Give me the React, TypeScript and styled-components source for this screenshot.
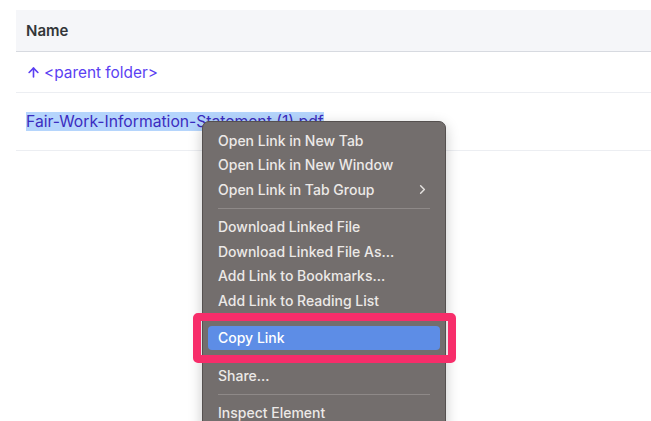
import styled, { createGlobalStyle, css } from "styled-components";
import { ArrowUp, ChevronRight } from "lucide-react";

const GlobalStyle = createGlobalStyle`
    html, body {
        margin: 0;
        padding: 0;
        background: #fff;
    }
    body {
        font-family: Inter, "Noto Sans", sans-serif;
    }
`

type Entry = { label: string; submenu?: boolean; active?: boolean } | "sep";

const menu: Entry[] = [
    { label: "Open Link in New Tab" },
    { label: "Open Link in New Window" },
    { label: "Open Link in Tab Group", submenu: true },
    "sep",
    { label: "Download Linked File" },
    { label: "Download Linked File As…" },
    { label: "Add Link to Bookmarks…" },
    { label: "Add Link to Reading List" },
    "sep",
    { label: "Copy Link", active: true },
    "sep",
    { label: "Share…" },
    "sep",
    { label: "Inspect Element" },
];

function App() {
    return (
        <Page>
            <GlobalStyle />
            <Table>
                <HeadRow>Name</HeadRow>
                <Row height={40}>
                    <ParentLink href="#">
                        <ArrowUp size={15} strokeWidth={2.6} />
                        &lt;parent folder&gt;
                    </ParentLink>
                </Row>
                <Row height={57}>
                    <FileLink href="#">Fair-Work-Information-Statement (1).pdf</FileLink>
                </Row>
            </Table>

            <Menu>
                {menu.map((item, i) =>
                    item === "sep" ? (
                        <Separator key={i} />
                    ) : (
                        <MenuItem key={i} active={item.active}>
                            {item.label}
                            {item.submenu && <ChevronRight size={15} strokeWidth={2.4} />}
                        </MenuItem>
                    )
                )}
            </Menu>
            <Callout />
        </Page>
    )
}

export default App

const Page = styled.div`
    position: relative;
    height: 421px;
    overflow: hidden;
    padding: 10px 0 0 16px;
    box-sizing: border-box;
`

const Table = styled.div`
    display: flex;
    flex-direction: column;
`

const HeadRow = styled.div`
    height: 41px;
    display: flex;
    align-items: center;
    padding-left: 10px;
    background-color: #f5f6f9;
    border-bottom: 1px solid #d7dae0;
    color: #333639;
    font-size: 15px;
    font-weight: 600;
`

const Row = styled.div<{ height: number }>`
    height: ${props => props.height}px;
    display: flex;
    align-items: center;
    padding-left: 10px;
    border-bottom: 1px solid #eceef2;
    font-size: 15.4px;
`

const ParentLink = styled.a`
    display: flex;
    align-items: center;
    gap: 3px;
    color: #5b3ff2;
    text-decoration: none;
`

const FileLink = styled.a`
    color: #3b2cc0;
    text-decoration: none;
    background-color: #b5d5fc;
    font-size: 15.7px;
    line-height: 19px;
`

const Menu = styled.div`
    position: absolute;
    left: 202px;
    top: 121px;
    width: 244px;
    padding: 6px 0;
    box-sizing: border-box;
    background-color: #736e6d;
    border: 1px solid #55504f;
    border-radius: 7px;
    box-shadow: 0 4px 14px rgba(0, 0, 0, 0.22);
    display: flex;
    flex-direction: column;
    font-family: Inter, "Noto Sans", sans-serif;
`

const MenuItem = styled.div<{ active?: boolean }>`
    height: 24.5px;
    margin: 0 5px;
    padding: 0 10px;
    display: flex;
    align-items: center;
    justify-content: space-between;
    border-radius: 4px;
    color: #ece9e7;
    font-size: 14px;
    font-weight: 500;

    svg {
        color: #e4e1df;
    }

    ${props => props.active && css`
        background-color: #5d8de6;
        color: #fff;
    `}
`

const Separator = styled.div`
    height: 1px;
    margin: 6px 15px;
    background-color: #8e8988;
`

const Callout = styled.div`
    position: absolute;
    left: 193px;
    top: 313px;
    width: 263px;
    height: 50px;
    box-sizing: border-box;
    border: 8px solid #f72d6a;
    border-radius: 5px;
`
